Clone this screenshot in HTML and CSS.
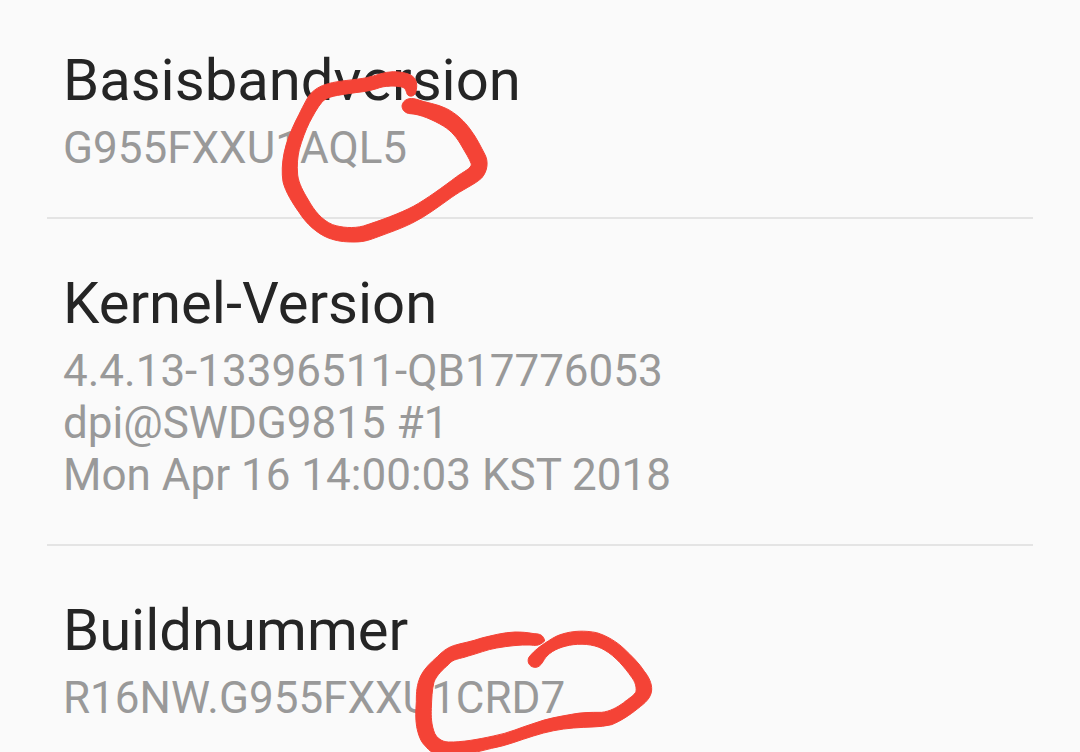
FILE: index.html
```html
<!DOCTYPE html>
<html lang="de">
<head>
<meta charset="utf-8">
<meta name="viewport" content="width=device-width, initial-scale=1">
<title>Softwareinformationen</title>
<link rel="stylesheet" href="styles.css">
</head>
<body>
<main>
  <dl class="info-list">
    <div class="info-item">
      <dt class="info-title">Basisbandversion</dt>
      <dd class="info-value">G955FXXU1AQL5
        <svg class="mark mark-baseband" viewBox="0 0 810 630" aria-hidden="true">
          <path d="M440 128C442 142 462 142 467 128C471 115 472 99 466 88C456 71 430 66 400 65C370 66 350 76 320 83C285 90 235 92 205 101C180 107 160 120 147 137C135 155 119 190 107 213C94 240 79 275 72 310C66 340 65 370 69 395C76 425 98 460 118 488C138 520 170 550 205 564C230 573 250 576 282 576C315 576 330 569 355 560C390 547 425 535 455 520C500 498 535 470 575 442C605 420 645 403 665 384C684 362 685 333 675 314C662 289 650 264 632 240C615 215 588 190 560 176C530 161 500 159 470 148C448 141 429 149 426 167C426 181 437 190 450 191C480 192 520 210 550 228C575 243 592 265 605 288C616 308 628 325 634 342C635 355 610 365 590 380C550 410 500 447 460 469C420 490 360 512 310 528C280 536 245 533 218 524C185 510 163 482 145 450C130 425 116 400 113 375C110 345 113 320 118 298C126 270 137 240 148 218C159 198 170 175 187 155C205 138 235 136 265 131C295 126 325 125 350 116C375 106 405 107 425 111C436 114 437 120 440 128Z"/>
        </svg>
      </dd>
    </div>
    <div class="info-item">
      <dt class="info-title">Kernel-Version</dt>
      <dd class="info-value">4.4.13-13396511-QB17776053<br>dpi@SWDG9815 #1<br>Mon Apr 16 14:00:03 KST 2018</dd>
    </div>
    <div class="info-item">
      <dt class="info-title">Buildnummer</dt>
      <dd class="info-value">R16NW.G955FXXU1CRD7
        <svg class="mark mark-build" viewBox="0 0 810 480" aria-hidden="true">
          <path d="M434 123C431 106 420 101 402 101C380 97 365 96 345 96C310 97 275 107 245 114C215 125 185 129 160 137C140 144 127 155 112 170C92 188 73 205 62 228C50 255 49 275 49 305C47 335 46 355 50 380C55 405 62 425 76 438C88 453 105 466 130 469C180 470 230 456 275 445C320 437 360 420 400 408C440 395 480 387 520 384C560 380 600 383 635 374C660 364 690 345 713 326C735 309 753 295 755 270C756 250 746 230 733 214C718 190 695 168 672 146C650 125 620 107 590 98C555 91 520 92 487 102C465 108 450 120 434 130C415 142 396 159 386 173C380 189 391 203 408 202C425 200 429 180 441 168C460 148 490 138 520 134C555 130 590 135 615 151C645 168 675 203 695 232C705 245 710 260 708 274C705 285 685 296 671 308C650 323 630 334 605 337C570 337 545 337 515 343C475 350 440 356 405 369C365 381 325 400 280 408C235 418 185 427 145 426C125 425 112 415 104 400C94 375 93 350 94 325C95 295 96 270 102 246C110 225 130 207 145 194C158 176 180 177 205 168C235 160 260 149 290 144C325 138 360 134 390 135C405 136 415 140 434 123Z"/>
        </svg>
      </dd>
    </div>
  </dl>
</main>
</body>
</html>
```
FILE: styles.css
```css
html {
  scrollbar-width: none;
}

body {
  margin: 0;
  background: #fafafa;
  color: #252525;
  font-family: Roboto, "Noto Sans", sans-serif;
}

.info-list {
  margin: 0 47px;
}

.info-item {
  padding: 48px 16px 43px;
  border-bottom: 2px solid #e4e4e4;
}

.info-item:first-child {
  padding-top: 44px;
}

.info-item:last-child {
  border-bottom: 0;
}

.info-title {
  font-size: 58px;
  line-height: 72px;
}

.info-value {
  position: relative;
  margin: 6px 0 0;
  color: #999;
  font-size: 44px;
  line-height: 52px;
}

.mark {
  position: absolute;
  fill: #f44336;
  stroke: #f44336;
  stroke-width: 3;
}

.mark-baseband {
  top: -72px;
  left: 197px;
  width: 270px;
  height: 210px;
}

.mark-build {
  top: -72px;
  left: 337px;
  width: 270px;
  height: 160px;
}
```
